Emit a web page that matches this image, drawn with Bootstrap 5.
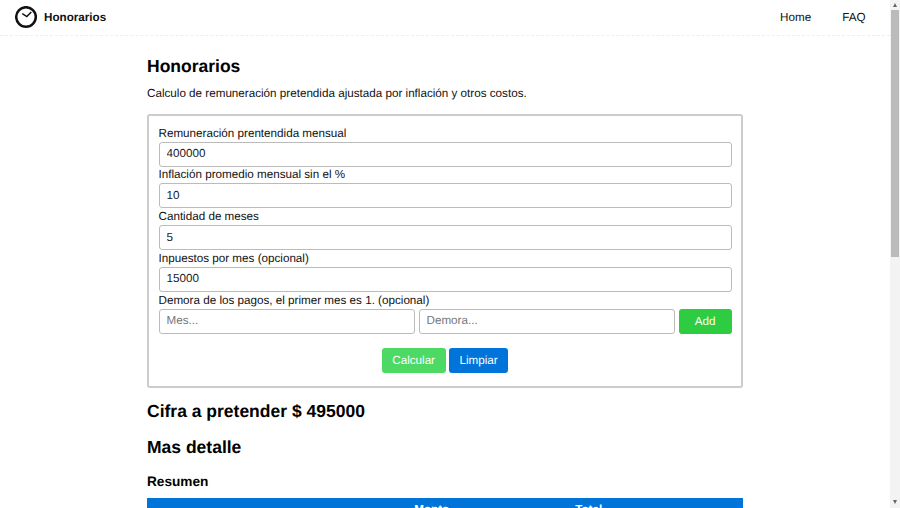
<!DOCTYPE html>
<html lang="es">
<head>
<meta charset="utf-8">
<title>Honorarios</title>
<link href="https://cdn.jsdelivr.net/npm/bootstrap@5.3.0/dist/css/bootstrap.min.css" rel="stylesheet">
<style>
body{font-family:"Liberation Sans",Arial,sans-serif;font-size:11.66px;color:#111;background:#fff;padding-right:10px;text-rendering:geometricPrecision}
.topbar{height:35.5px;padding:0 9px 0 15px;border-bottom:1px dashed #eee}
.brandname{font-weight:700;font-size:11.66px;color:#111;text-decoration:none;gap:6px}
.toplink{font-size:11.66px;color:#111;text-decoration:none;padding:0 15.5px}
.mainwrap{width:596px;padding-top:19px;padding-bottom:400px}
.pagetitle{font-size:17.5px;font-weight:700;margin:0 0 8.5px;line-height:22px;color:#000}
.subtitle{font-size:11.66px;line-height:18px;margin:0 0 11px}
.formbox{border:2px solid #ccc;border-radius:3px;padding:10.5px 9.5px 0;height:273.5px}
.fieldlabel{font-size:11.66px;line-height:14px;margin:0 0 1px;display:block}
.fieldinput{height:25px;font-size:11.66px;padding:0 7px 1px;border:1px solid #bbb;border-radius:3px;margin-bottom:1.75px;color:#222;text-rendering:geometricPrecision}
.fieldinput::placeholder{color:#777}
.formrow{gap:3.5px}
.btnadd,.btncalc,.btnclear{height:25px;font-size:11.66px;border:0;border-radius:3px;color:#fff;padding:0 10.5px;line-height:25px;text-rendering:geometricPrecision}
.btnadd{background:#2ecc40;width:53px;padding:0}
.btncalc{background:#4cd964}
.btnclear{background:#0074d9}
.actionrow{gap:3.5px;margin-top:12.75px}
.resulttitle{font-size:17.5px;font-weight:700;line-height:22px;margin:12.5px 0 14px;color:#000}
.detailtitle{font-size:17.5px;font-weight:700;line-height:22px;margin:0 0 14.5px;color:#000}
.sectiontitle{font-size:13.65px;font-weight:700;line-height:18px;margin:0 0 7px;color:#000}
.sumtable{width:100%;background:#0074d9;color:#fff;font-size:11.66px;font-weight:700}
.sumtable th{padding:3px 5px}
.colname{width:44%}
.colamount{width:27%}
.sumtable td{background:#fff;color:#111;font-weight:400;padding:4px 5px}
.fakebar{position:fixed;top:0;right:0;bottom:0;width:10px;background:#f3f3f3}
.barthumb{position:absolute;top:10px;left:1px;width:8px;height:247px;background:#bbb}
.bararrow{position:absolute;left:3px;width:0;height:0;border-left:2.5px solid transparent;border-right:2.5px solid transparent}
.bararrow-up{top:3px;border-bottom:4px solid #666}
.bararrow-down{bottom:4px;border-top:4px solid #666}
</style>
</head>
<body>
<nav class="topbar d-flex align-items-center justify-content-between">
  <a class="brandname d-flex align-items-center" href="#">
    <svg width="23" height="23" viewBox="0 0 23 23" fill="none" stroke="#111"><circle cx="11" cy="11" r="9.8" stroke-width="2.5"/><path d="M7.3 7.6l4.5 3 4.5-4.6" stroke-width="1.5"/></svg>
    <span>Honorarios</span>
  </a>
  <div class="d-flex">
    <a class="toplink" href="#">Home</a>
    <a class="toplink" href="#">FAQ</a>
  </div>
</nav>
<main class="mainwrap mx-auto">
  <h1 class="pagetitle">Honorarios</h1>
  <p class="subtitle">Calculo de remuneración pretendida ajustada por inflación y otros costos.</p>
  <form class="formbox">
    <label class="fieldlabel">Remuneración prentendida mensual</label>
    <input class="form-control fieldinput" value="400000">
    <label class="fieldlabel">Inflación promedio mensual sin el %</label>
    <input class="form-control fieldinput" value="10">
    <label class="fieldlabel">Cantidad de meses</label>
    <input class="form-control fieldinput" value="5">
    <label class="fieldlabel">Inpuestos por mes (opcional)</label>
    <input class="form-control fieldinput" value="15000">
    <label class="fieldlabel">Demora de los pagos, el primer mes es 1. (opcional)</label>
    <div class="d-flex formrow">
      <input class="form-control fieldinput flex-fill" placeholder="Mes...">
      <input class="form-control fieldinput flex-fill" placeholder="Demora...">
      <button type="button" class="btn btnadd flex-shrink-0">Add</button>
    </div>
    <div class="d-flex justify-content-center actionrow">
      <button type="button" class="btn btncalc">Calcular</button>
      <button type="button" class="btn btnclear">Limpiar</button>
    </div>
  </form>
  <h2 class="resulttitle">Cifra a pretender $ 495000</h2>
  <h2 class="detailtitle">Mas detalle</h2>
  <h3 class="sectiontitle">Resumen</h3>
  <table class="sumtable">
    <thead><tr><th class="colname"></th><th class="colamount">Monto</th><th>Total</th></tr></thead>
    <tbody><tr><td>Remuneración</td><td>400000</td><td>495000</td></tr></tbody>
  </table>
</main>
<div class="fakebar" aria-hidden="true">
  <div class="bararrow bararrow-up"></div>
  <div class="barthumb"></div>
  <div class="bararrow bararrow-down"></div>
</div>
</body>
</html>
